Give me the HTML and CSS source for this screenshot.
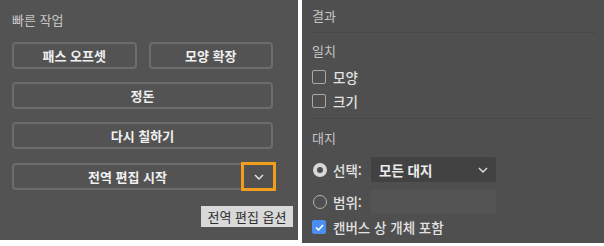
FILE: index.html
```html
<!DOCTYPE html>
<html lang="ko">
<head>
    <meta charset="UTF-8">
    <title>빠른 작업</title>
    <link rel="stylesheet" href="styles.css">
</head>
<body>
    <div class="panel quick">
        <div class="panel-title">빠른 작업</div>
        <div class="btn-row">
            <button class="btn half">패스 오프셋</button>
            <button class="btn half">모양 확장</button>
        </div>
        <div class="btn-row">
            <button class="btn full">정돈</button>
        </div>
        <div class="btn-row">
            <button class="btn full">다시 칠하기</button>
        </div>
        <div class="btn-row split">
            <button class="btn main">전역 편집 시작</button>
            <button class="toggle">
                <svg width="10" height="6" viewBox="0 0 10 6"><path d="M1 1 L5 5 L9 1" fill="none" stroke="#e8e8e8" stroke-width="1.4"/></svg>
            </button>
        </div>
        <div class="tooltip">전역 편집 옵션</div>
    </div>

    <div class="panel result">
        <div class="result-head">결과</div>
        <div class="section">
            <div class="label">일치</div>
            <div class="check-row"><span class="box"></span>모양</div>
            <div class="check-row"><span class="box"></span>크기</div>
        </div>
        <div class="section board">
            <div class="label">대지</div>
            <div class="radio-row">
                <span class="radio on"></span>
                <span class="radio-text">선택:</span>
                <div class="select">
                    <span>모든 대지</span>
                    <svg width="10" height="6" viewBox="0 0 10 6"><path d="M1 1 L5 5 L9 1" fill="none" stroke="#e0e0e0" stroke-width="1.4"/></svg>
                </div>
            </div>
            <div class="radio-row">
                <span class="radio"></span>
                <span class="radio-text">범위:</span>
                <div class="field"></div>
            </div>
            <div class="check-row checked-row">
                <span class="box checked">
                    <svg width="9" height="7" viewBox="0 0 9 7"><path d="M1 3.5 L3.5 6 L8 1" fill="none" stroke="#fff" stroke-width="1.6"/></svg>
                </span>캔버스 상 개체 포함
            </div>
        </div>
    </div>
</body>
</html>
```

FILE: styles.css
```css
body {
    margin: 0;
    background: #ffffff;
    display: flex;
    align-items: flex-start;
    gap: 4px;
    font-family: "Noto Sans CJK KR", "Noto Sans", sans-serif;
    font-size: 13px;
}
.panel {
    box-sizing: border-box;
}
.quick {
    position: relative;
    width: 298px;
    height: 240px;
    background: #535353;
    padding: 12px 0 0 12px;
}
.panel-title {
    color: #c6c6c6;
    line-height: 16px;
    margin-bottom: 14px;
}
.btn-row {
    display: flex;
    gap: 12px;
    margin-bottom: 13px;
    width: 261px;
}
.btn {
    box-sizing: border-box;
    height: 27px;
    background: transparent;
    border: 2px solid #6c6c6c;
    border-radius: 4px;
    color: #f0f0f0;
    font-family: inherit;
    font-size: 13px;
    font-weight: bold;
    padding: 0;
}
.half {
    flex: 1;
}
.full {
    width: 100%;
}
.split {
    gap: 0;
    align-items: center;
    width: 264px;
}
.main {
    width: 229px;
    border-right: none;
    border-radius: 4px 0 0 4px;
}
.toggle {
    box-sizing: border-box;
    width: 35px;
    height: 29px;
    border: 3px solid #f29d1c;
    background: #515151;
    padding: 0;
    display: flex;
    align-items: center;
    justify-content: center;
}
.tooltip {
    position: absolute;
    left: 201px;
    top: 206px;
    width: 92px;
    height: 21px;
    box-sizing: border-box;
    background: #d9d9d9;
    color: #2e2e2e;
    line-height: 21px;
    text-align: center;
    font-size: 13px;
}
.result {
    width: 302px;
    height: 243px;
    background: #4f4f4f;
    padding: 0 9px 0 10px;
}
.result-head {
    color: #c6c6c6;
    line-height: 16px;
    padding: 8px 0 8px 0;
    border-bottom: 1px solid #474747;
    margin-bottom: 10px;
}
.label {
    color: #c6c6c6;
    line-height: 16px;
    margin-bottom: 11px;
}
.check-row {
    display: flex;
    align-items: center;
    gap: 7px;
    color: #e2e2e2;
    font-size: 13.5px;
    font-weight: 500;
    height: 14px;
    margin-bottom: 10px;
}
.box {
    box-sizing: border-box;
    width: 14px;
    height: 14px;
    border: 1.5px solid #a8a8a8;
    border-radius: 2px;
    display: flex;
    align-items: center;
    justify-content: center;
}
.box.checked {
    background: #4a8ff0;
    border-color: #4a8ff0;
}
.board {
    border-top: 1px solid #474747;
    padding-top: 11px;
}
.radio-row {
    display: flex;
    align-items: center;
    height: 25px;
    margin-bottom: 7px;
    color: #e2e2e2;
    font-size: 13.5px;
    font-weight: 500;
}
.radio {
    box-sizing: border-box;
    width: 14px;
    height: 14px;
    border-radius: 50%;
    border: 1.5px solid #b0b0b0;
    margin-left: 1px;
}
.radio.on {
    border: 4px solid #d8d8d8;
    background: #4f4f4f;
}
.radio-text {
    margin-left: 6px;
    width: 38px;
}
.select {
    box-sizing: border-box;
    width: 125px;
    height: 25px;
    background: #424242;
    border-radius: 2px;
    display: flex;
    align-items: center;
    justify-content: space-between;
    padding: 0 8px;
    color: #ededed;
    font-weight: bold;
}
.field {
    width: 125px;
    height: 23px;
    background: #545454;
}
.checked-row {
    margin-top: -1px;
}
```
